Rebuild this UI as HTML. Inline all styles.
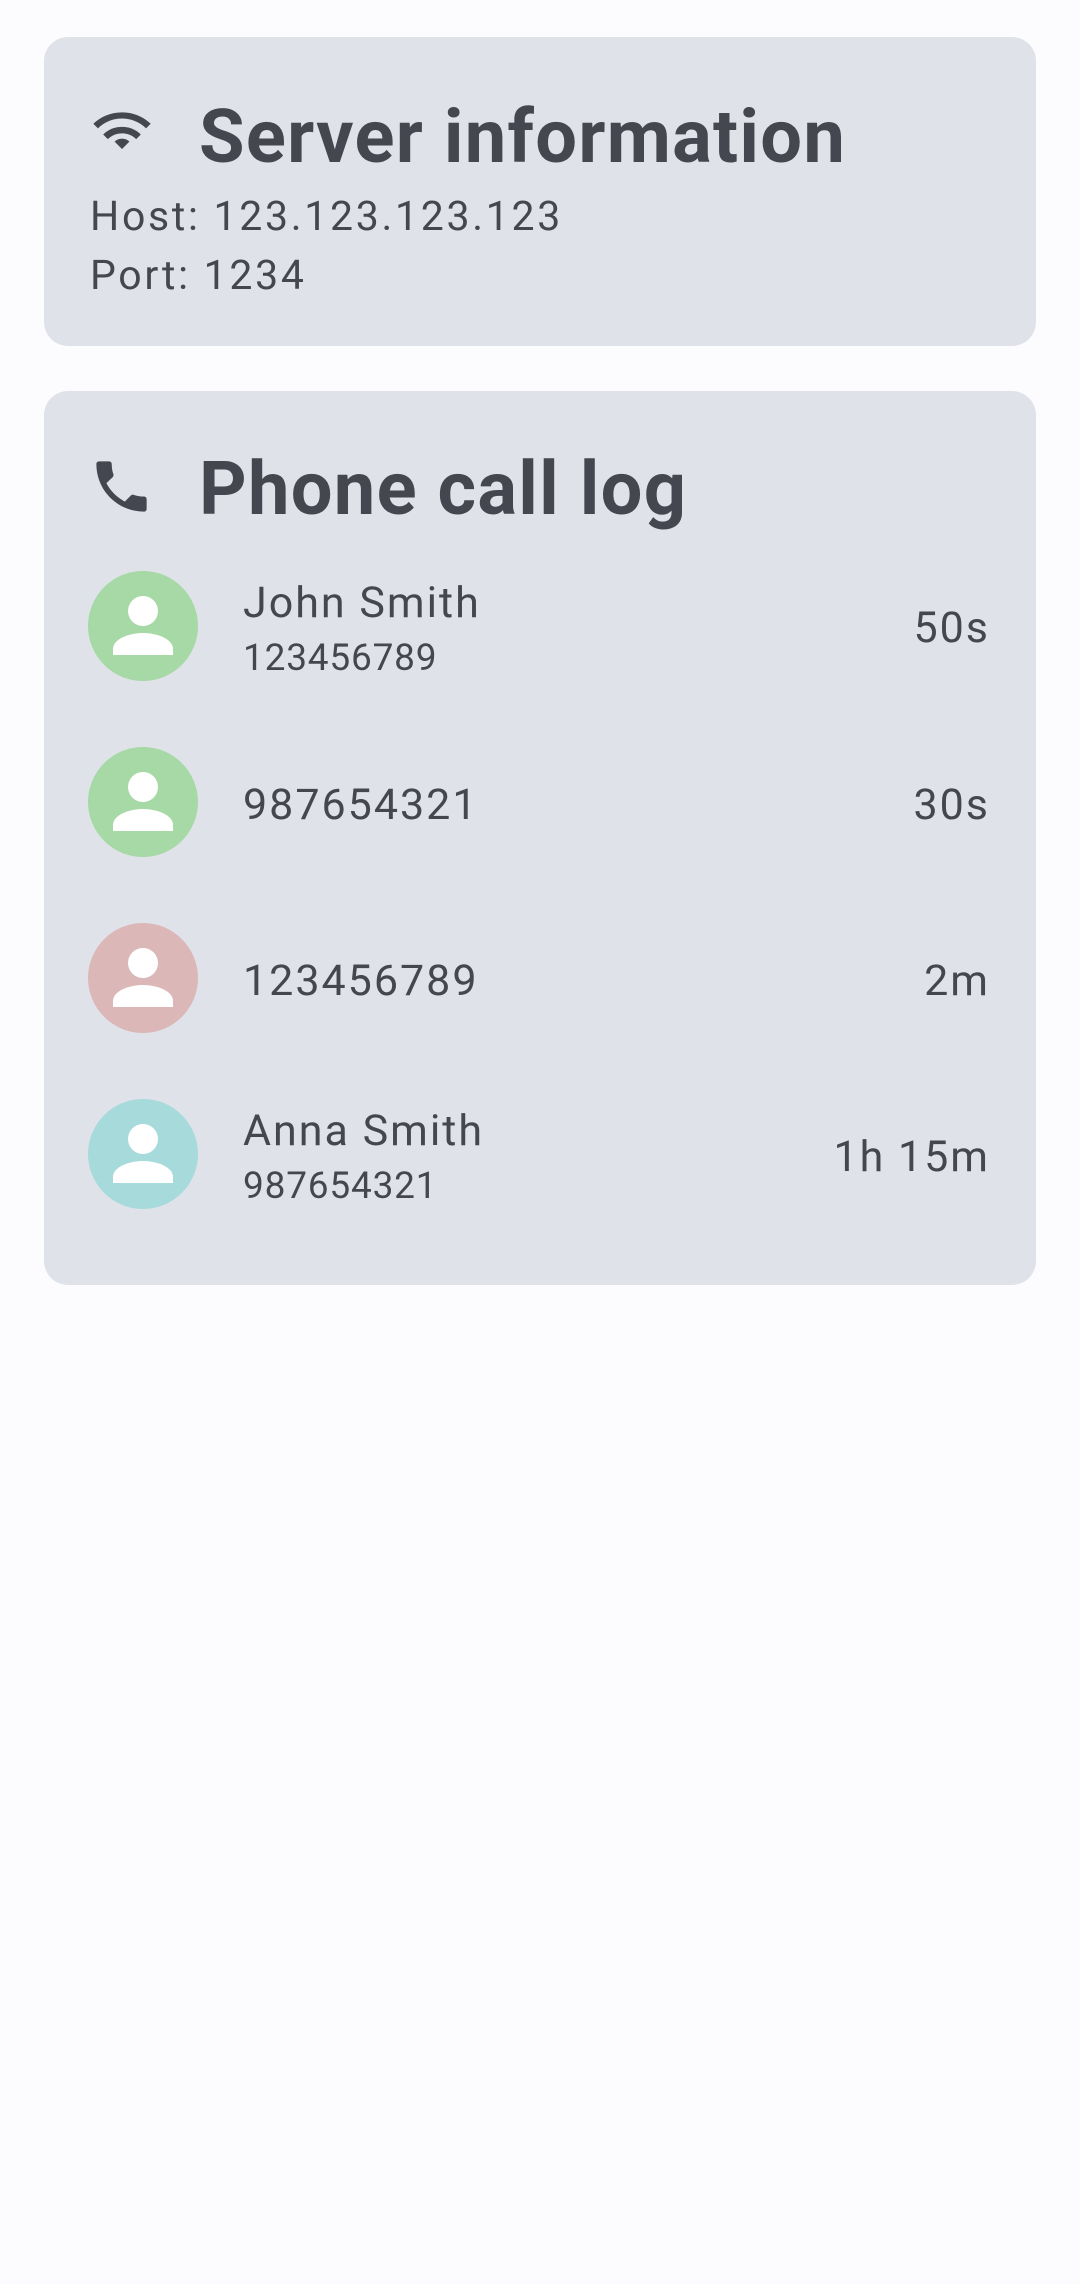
<!DOCTYPE html>
<html><head><meta charset="utf-8"><style>
html,body{margin:0;padding:0}
body{width:1080px;height:2284px;background:#fcfcff;position:relative;font-family:"Roboto","Liberation Sans",sans-serif;color:#44474f;overflow:hidden}
.card{position:absolute;left:44px;width:992px;background:#e0e2ea;border-radius:24px}
.t{position:absolute;line-height:1;white-space:nowrap}
.title{font-size:74px;font-weight:bold;left:199px;letter-spacing:1.3px}
.name{font-size:43px;left:243px;letter-spacing:2px}
.sub{font-size:37px;left:243px;letter-spacing:0.8px}
.dur{font-size:43px;right:90px;letter-spacing:2px}
.av{position:absolute;left:88px;width:110px;height:110px;border-radius:50%}
.av svg{position:absolute;left:0;top:0}
</style></head><body>
<div class="card" style="top:37px;height:309px"></div>
<div class="card" style="top:391px;height:894px"></div>

<svg style="position:absolute;left:85px;top:92px" width="74" height="74" viewBox="0 0 24 24"><path fill="#44474f" d="M12 18.5 L9.6 16.1 a3.4 3.4 0 0 1 4.8 0 Z M12 11.3 c-2.4 0-4.5 0.9-6.1 2.5 l1.5 1.5 c1.2-1.2 2.8-1.9 4.6-1.9 s3.4 0.7 4.6 1.9 l1.5-1.5 c-1.6-1.6-3.7-2.5-6.1-2.5 Z M12 6.6 c-3.6 0-6.9 1.4-9.3 3.7 l1.5 1.5 c2-2 4.8-3.2 7.8-3.2 s5.8 1.2 7.8 3.2 l1.5-1.5 C18.9 8 15.6 6.6 12 6.6 Z"/></svg>
<div class="t title" style="top:101px">Server information</div>
<div class="t" style="font-size:41px;left:90px;top:197px;letter-spacing:2.7px">Host: 123.123.123.123</div>
<div class="t" style="font-size:41px;left:90px;top:256px;letter-spacing:2.7px">Port: 1234</div>

<svg style="position:absolute;left:88px;top:453px" width="67" height="67" viewBox="0 0 24 24"><path fill="#44474f" d="M6.6 10.8c1.4 2.8 3.8 5.1 6.6 6.6l2.2-2.2c.3-.3.7-.4 1-.2 1.1.4 2.3.6 3.6.6.6 0 1 .4 1 1V20c0 .6-.4 1-1 1C10.6 21 3 13.4 3 4c0-.6.4-1 1-1h3.5c.6 0 1 .4 1 1 0 1.3.2 2.5.6 3.6.1.3 0 .7-.2 1z"/></svg>
<div class="t title" style="top:453px">Phone call log</div>

<div class="av" style="top:571px;background:#a6d9a5"><svg width="110" height="110"><circle cx="55" cy="40" r="15" fill="#fff"/><path d="M25 84 v-6 c0-10 16-16 30-16 s30 6 30 16 v6 z" fill="#fff"/></svg></div>
<div class="t name" style="top:582px">John Smith</div>
<div class="t sub" style="top:640px">123456789</div>
<div class="t dur" style="top:607px">50s</div>

<div class="av" style="top:747px;background:#a6d9a5"><svg width="110" height="110"><circle cx="55" cy="40" r="15" fill="#fff"/><path d="M25 84 v-6 c0-10 16-16 30-16 s30 6 30 16 v6 z" fill="#fff"/></svg></div>
<div class="t name" style="top:784px">987654321</div>
<div class="t dur" style="top:784px">30s</div>

<div class="av" style="top:923px;background:#dbb7b7"><svg width="110" height="110"><circle cx="55" cy="40" r="15" fill="#fff"/><path d="M25 84 v-6 c0-10 16-16 30-16 s30 6 30 16 v6 z" fill="#fff"/></svg></div>
<div class="t name" style="top:960px">123456789</div>
<div class="t dur" style="top:960px">2m</div>

<div class="av" style="top:1099px;background:#a6dadb"><svg width="110" height="110"><circle cx="55" cy="40" r="15" fill="#fff"/><path d="M25 84 v-6 c0-10 16-16 30-16 s30 6 30 16 v6 z" fill="#fff"/></svg></div>
<div class="t name" style="top:1110px">Anna Smith</div>
<div class="t sub" style="top:1168px">987654321</div>
<div class="t dur" style="top:1136px">1h 15m</div>
</body></html>
